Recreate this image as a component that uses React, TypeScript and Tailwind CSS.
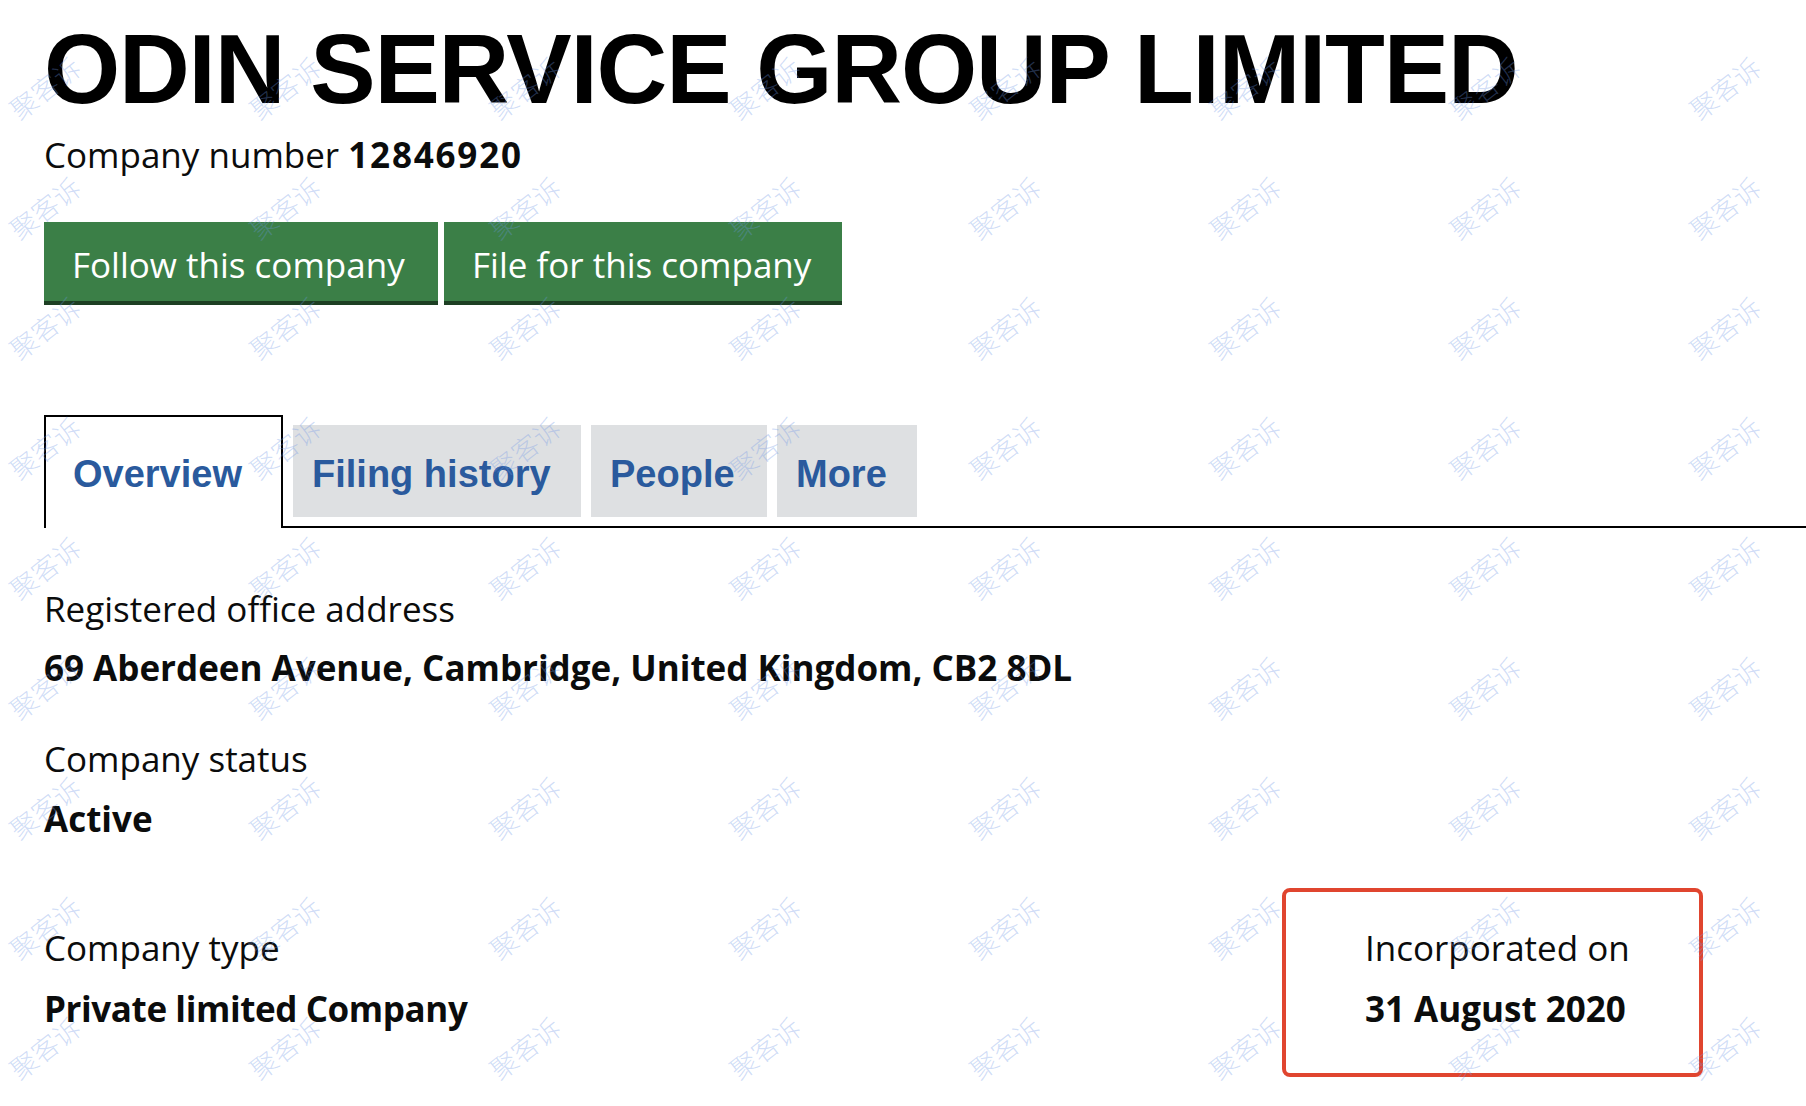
import React from "react";

const WM_COLS = 8;
const WM_ROWS = 9;

function Watermarks() {
  const items = Array.from({ length: WM_COLS * WM_ROWS });
  return (
    <div className="pointer-events-none absolute left-[-76px] top-[27px] grid grid-cols-[repeat(8,240px)] auto-rows-[120px]">
      {items.map((_, i) => (
        <div key={i} className="flex items-center justify-center">
          <span className="rotate-[-38deg] whitespace-nowrap font-['Noto_Sans_CJK_SC',sans-serif] text-[27px] font-light leading-none text-[rgba(110,150,230,0.32)]">
            聚客诉
          </span>
        </div>
      ))}
    </div>
  );
}

export default function App() {
  return (
    <div className="relative h-[1106px] w-[1806px] overflow-hidden bg-white text-[#0b0c0c]">
      <div className="pl-[44px] pt-[20px]">
        <h1 className="whitespace-nowrap font-['Liberation_Sans',Arial,sans-serif] text-[98px] font-bold leading-none tracking-[-1.2px] text-black">
          ODIN SERVICE GROUP LIMITED
        </h1>
        <p className="mt-[16px] font-['Open_Sans',sans-serif] text-[35px] leading-[42px]">
          Company number <span className="font-bold tracking-[1.8px]">12846920</span>
        </p>

        <div className="mt-[46px] flex gap-[6px] font-['Open_Sans',sans-serif] text-[35px] leading-[42px]">
          <button className="w-[394px] bg-[#3b7f47] pb-[15px] pl-[28px] pt-[22px] text-left text-white shadow-[0_4px_0_#1d3f23]">
            Follow this company
          </button>
          <button className="w-[398px] bg-[#3b7f47] pb-[15px] pl-[28px] pt-[22px] text-left text-white shadow-[0_4px_0_#1d3f23]">
            File for this company
          </button>
        </div>

        <div className="mt-[114px] flex items-end gap-[10px] border-b-2 border-black font-['Liberation_Sans',Arial,sans-serif] text-[38px] font-bold leading-none text-[#2a5a9d]">
          <div className="mb-[-2px] h-[113px] w-[239px] border-2 border-b-0 border-black bg-white pl-[27px] pt-[38px]">
            Overview
          </div>
          <div className="mb-[9px] h-[92px] w-[288px] bg-[#dee0e2] pl-[19px] pt-[30px]">
            Filing history
          </div>
          <div className="mb-[9px] h-[92px] w-[176px] bg-[#dee0e2] pl-[19px] pt-[30px]">
            People
          </div>
          <div className="mb-[9px] h-[92px] w-[140px] bg-[#dee0e2] pl-[19px] pt-[30px]">
            More
          </div>
        </div>

        <div className="mt-[60px] font-['Open_Sans',sans-serif] text-[35px] leading-[42px]">
          <div>Registered office address</div>
          <div className="mt-[17px] font-bold">
            69 Aberdeen Avenue, Cambridge, United Kingdom, CB2 8DL
          </div>
          <div className="mt-[49px]">Company status</div>
          <div className="mt-[18px] font-bold">Active</div>

          <div className="mt-[48px] flex items-start">
            <div className="w-[1238px] pt-[39px]">
              <div>Company type</div>
              <div className="mt-[19px] font-bold tracking-[-0.4px]">Private limited Company</div>
            </div>
            <div className="h-[189px] w-[421px] rounded-[8px] border-4 border-[#e0452f] pl-[79px] pt-[35px]">
              <div>Incorporated on</div>
              <div className="mt-[19px] font-bold">31 August 2020</div>
            </div>
          </div>
        </div>
      </div>

      <Watermarks />
    </div>
  );
}
